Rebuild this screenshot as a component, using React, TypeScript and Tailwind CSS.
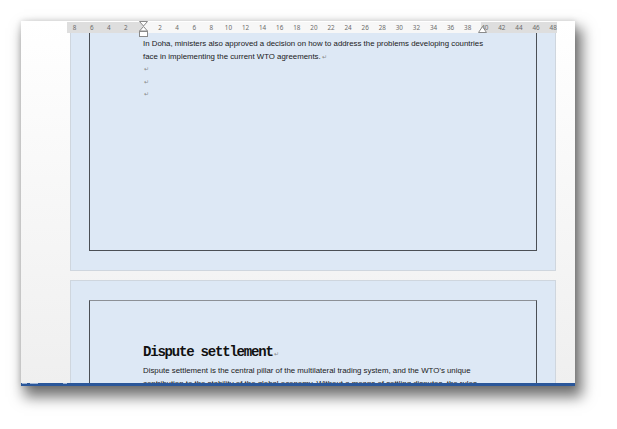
const LEFT_MARKS = [8, 6, 4, 2];
const RIGHT_MARKS = [2, 4, 6, 8, 10, 12, 14, 16, 18, 20, 22, 24, 26, 28, 30, 32, 34, 36, 38, 40, 42, 44, 46, 48];
const STEP = 8.545; // px per ruler unit
const ORIGIN = 76; // left indent on the ruler

function Ruler() {
  return (
    <div className="relative ml-[46px] mt-px flex h-[11px] w-[490px] bg-[#dedede] text-[6.3px] leading-[11px] text-[#6b6b6b]">
      <div className="w-[76px]" />
      <div className="w-[338px] bg-[#f7f7f7]" />
      <div className="flex-1" />
      {LEFT_MARKS.map((v) => (
        <span
          key={`l${v}`}
          className="absolute top-0 w-4 -translate-x-1/2 text-center"
          style={{ left: ORIGIN - v * STEP }}
        >
          {v}
        </span>
      ))}
      {RIGHT_MARKS.map((v) => (
        <span
          key={`r${v}`}
          className="absolute top-0 w-4 -translate-x-1/2 text-center"
          style={{ left: ORIGIN + v * STEP }}
        >
          {v}
        </span>
      ))}
      {/* first-line / hanging indent marker */}
      <svg className="absolute -top-px left-[72px] z-10" width="9" height="17" viewBox="0 0 9 17">
        <path d="M0.5 0.5h8L4.5 5z" fill="#fff" stroke="#8a8a8a" />
        <path d="M4.5 5.5L8.5 10h-8z" fill="#fff" stroke="#8a8a8a" />
        <rect x="0.5" y="10.5" width="8" height="5" fill="#fff" stroke="#8a8a8a" />
      </svg>
      {/* right indent marker */}
      <svg className="absolute top-[4px] left-[411px]" width="9" height="7" viewBox="0 0 9 7">
        <path d="M4.5 0.5L8.5 6.5h-8z" fill="#fff" stroke="#8a8a8a" />
      </svg>
    </div>
  );
}

function Pilcrow() {
  return <span className="ml-px text-[6px] text-[#8a8a8a]">↵</span>;
}

export default function App() {
  return (
    <div className="h-[429px] w-[617px] overflow-hidden bg-white pl-[21px] pt-[21px]">
      <div className="flex h-[365px] w-[554px] flex-col bg-gradient-to-b from-white to-[#efefef] shadow-[5px_9px_13px_2px_rgba(0,0,0,0.55),0_0_6px_rgba(0,0,0,0.14)]">
        <Ruler />

        <div className="flex-1 overflow-hidden pl-[49px]">
          <div className="flex w-[486px] flex-col gap-[9px]">
            {/* page 1 (scrolled, top cut off) */}
            <div className="flex h-[238px] flex-col border-x border-b border-[#cfd6de] bg-[#dde8f5] px-[18px] pb-[19px]">
              <div className="flex-1 border-x-[1.5px] border-b-[1.5px] border-[#4b4f55] pl-[53px] pt-[5px] font-['Liberation_Sans',Arial,sans-serif] text-[7.85px] leading-[12.6px] text-[#1a1a1a]">
                <p>In Doha, ministers also approved a decision on how to address the problems developing countries</p>
                <p>
                  face in implementing the current WTO agreements.
                  <Pilcrow />
                </p>
                <p>
                  <Pilcrow />
                </p>
                <p>
                  <Pilcrow />
                </p>
                <p>
                  <Pilcrow />
                </p>
              </div>
            </div>

            {/* page 2 */}
            <div className="h-[200px] border border-[#cfd6de] bg-[#dde8f5] px-[18px] pt-[19px]">
              <div className="h-[200px] border-x-[1.5px] border-t-[1.5px] border-[#4b4f55] border-t-[#8c9096] pl-[53px] pt-[43px]">
                <h2 className="font-['Liberation_Mono','Courier_New',monospace] text-[14px] leading-[16px] font-bold tracking-[-1.2px] text-[#111]">
                  Dispute settlement
                  <span className="ml-px font-['Liberation_Sans',sans-serif] text-[6px] font-normal tracking-normal text-[#8a8a8a]">↵</span>
                </h2>
                <div className="mt-[3px] font-['Liberation_Sans',Arial,sans-serif] text-[7.85px] leading-[12.6px] text-[#1a1a1a]">
                  <p>Dispute settlement is the central pillar of the multilateral trading system, and the WTO’s unique</p>
                  <p>contribution to the stability of the global economy. Without a means of settling disputes, the rules</p>
                </div>
              </div>
            </div>
          </div>
        </div>

        {/* status bar, mostly cut off */}
        <div className="flex h-[3px] items-start gap-[3px] bg-[#2b579a] pl-px">
          <span className="h-px w-[5px] bg-[#9fb5d6]" />
          <span className="h-px w-[8px] bg-[#9fb5d6]" />
          <span className="ml-[22px] h-px w-[4px] bg-[#9fb5d6]" />
        </div>
      </div>
    </div>
  );
}
